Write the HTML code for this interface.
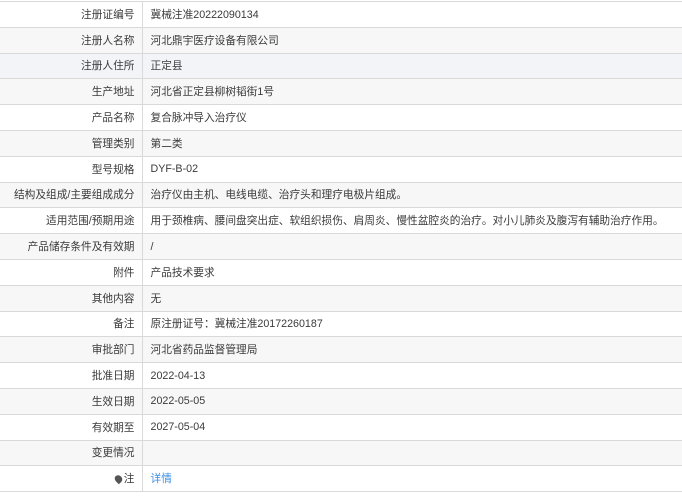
<!DOCTYPE html>
<html><head><meta charset="utf-8"><style>
html,body{margin:0;padding:0;background:#fff;width:682px;height:500px;overflow:hidden}
table{position:absolute;top:1px;left:0;width:682px;table-layout:fixed;border-collapse:collapse;font-family:"Liberation Sans","Noto Sans CJK SC",sans-serif;font-size:10.7px;color:#3a3a3a}
td{border-top:1px solid #d9d9d9;border-bottom:1px solid #d9d9d9;height:25.8px;padding:0;box-sizing:border-box;white-space:nowrap;overflow:hidden}
td.l{width:142px;text-align:right;padding-right:7px;border-right:1px solid #d9d9d9}
td.v{padding-left:8px}
tr:nth-child(even) td{background:#f7f7f7}
tr.h td{background:#f2f4f8}
a{color:#3a8ee6;text-decoration:none}
.pin{display:inline-block;width:7px;height:8px;background:#555;border-radius:50% 50% 50% 0;transform:rotate(-45deg);margin-right:2px;vertical-align:-1px}
</style></head><body>
<table>
<tr><td class="l">注册证编号</td><td class="v">冀械注准20222090134</td></tr>
<tr><td class="l">注册人名称</td><td class="v">河北鼎宇医疗设备有限公司</td></tr>
<tr class="h"><td class="l">注册人住所</td><td class="v">正定县</td></tr>
<tr><td class="l">生产地址</td><td class="v">河北省正定县柳树韬街1号</td></tr>
<tr><td class="l">产品名称</td><td class="v">复合脉冲导入治疗仪</td></tr>
<tr><td class="l">管理类别</td><td class="v">第二类</td></tr>
<tr><td class="l">型号规格</td><td class="v">DYF-B-02</td></tr>
<tr><td class="l">结构及组成/主要组成成分</td><td class="v">治疗仪由主机、电线电缆、治疗头和理疗电极片组成。</td></tr>
<tr><td class="l">适用范围/预期用途</td><td class="v">用于颈椎病、腰间盘突出症、软组织损伤、肩周炎、慢性盆腔炎的治疗。对小儿肺炎及腹泻有辅助治疗作用。</td></tr>
<tr><td class="l">产品储存条件及有效期</td><td class="v">/</td></tr>
<tr><td class="l">附件</td><td class="v">产品技术要求</td></tr>
<tr><td class="l">其他内容</td><td class="v">无</td></tr>
<tr><td class="l">备注</td><td class="v">原注册证号：冀械注准20172260187</td></tr>
<tr><td class="l">审批部门</td><td class="v">河北省药品监督管理局</td></tr>
<tr><td class="l">批准日期</td><td class="v">2022-04-13</td></tr>
<tr><td class="l">生效日期</td><td class="v">2022-05-05</td></tr>
<tr><td class="l">有效期至</td><td class="v">2027-05-04</td></tr>
<tr><td class="l">变更情况</td><td class="v"></td></tr>
<tr><td class="l" style="background:#fff"><span class="pin"></span>注</td><td class="v" style="background:#fff"><a>详情</a></td></tr>
</table>
</body></html>
